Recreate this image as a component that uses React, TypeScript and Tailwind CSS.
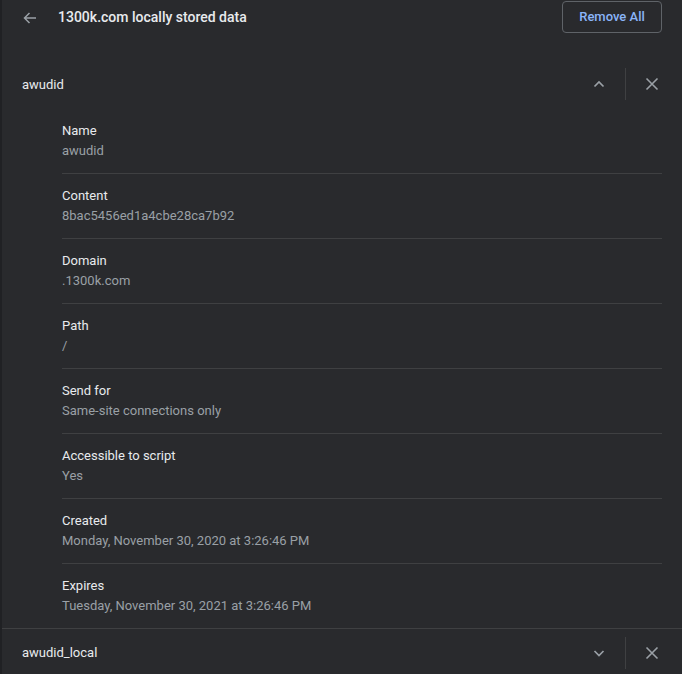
import React from "react";

const items: [string, string][] = [
  ["Name", "awudid"],
  ["Content", "8bac5456ed1a4cbe28ca7b92"],
  ["Domain", ".1300k.com"],
  ["Path", "/"],
  ["Send for", "Same-site connections only"],
  ["Accessible to script", "Yes"],
  ["Created", "Monday, November 30, 2020 at 3:26:46 PM"],
  ["Expires", "Tuesday, November 30, 2021 at 3:26:46 PM"],
];

function Chevron({ up }: { up: boolean }) {
  return (
    <svg width="20" height="20" viewBox="0 0 20 20" fill="none">
      <path
        d={up ? "M5.5 12.5 L10 8 L14.5 12.5" : "M5.5 8 L10 12.5 L14.5 8"}
        stroke="#9aa0a6"
        strokeWidth="1.7"
      />
    </svg>
  );
}

function Close() {
  return (
    <svg width="20" height="20" viewBox="0 0 20 20" fill="none">
      <path d="M4.5 4.5 L15.5 15.5 M15.5 4.5 L4.5 15.5" stroke="#9aa0a6" strokeWidth="1.6" />
    </svg>
  );
}

function RowHeader({ name, open, shift }: { name: string; open: boolean; shift?: boolean }) {
  return (
    <div className="flex h-[48px] items-center pl-[20px] pr-[12px]">
      <div className={"flex-1 text-[13px] text-[#e8eaed] " + (shift ? "pt-[2px]" : "")}>{name}</div>
      <div className="flex h-[36px] w-[36px] items-center justify-center">
        <Chevron up={open} />
      </div>
      <div className="ml-[8px] h-[32px] w-px bg-[#3f4042]" />
      <div className="ml-[8px] flex h-[36px] w-[36px] items-center justify-center">
        <Close />
      </div>
    </div>
  );
}

export default function App() {
  return (
    <div
      className="flex h-[674px] w-full overflow-hidden bg-[#292a2d]"
      style={{ fontFamily: "Roboto, 'Liberation Sans', sans-serif" }}
    >
      <div className="w-[2px] shrink-0 bg-[#202124]" />
      <div className="flex flex-1 flex-col">
        <div className="flex h-[34px] items-center pl-[20px] pr-[20px]">
          <div className="flex h-[20px] w-[16px] items-center justify-center pt-[2px]">
            <svg width="16" height="16" viewBox="0 0 16 16" fill="none">
              <path d="M14 8 H2.5 M7.5 3 L2.5 8 L7.5 13" stroke="#9aa0a6" strokeWidth="1.5" />
            </svg>
          </div>
          <div className="ml-[20px] flex-1 pt-[2px] text-[14px] font-medium text-[#e8eaed]">
            1300k.com locally stored data
          </div>
          <button className="mt-[1px] h-[32px] w-[100px] rounded-[4px] border border-[#5f6368] text-[13px] font-medium text-[#8ab4f8]">
            Remove All
          </button>
        </div>
        <div className="mt-[27px]">
          <RowHeader name="awudid" open={true} shift />
          <div className="pl-[60px] pr-[20px]">
            {items.map(([label, value], i) => (
              <div
                key={label}
                className={
                  "flex h-[65px] flex-col justify-center " +
                  (i > 0 ? "border-t border-[#3f4042]" : "")
                }
              >
                <div className="text-[13px] leading-5 text-[#e8eaed]">{label}</div>
                <div className="text-[13px] leading-5 text-[#9aa0a6]">{value}</div>
              </div>
            ))}
          </div>
          <div className="border-t border-[#3f4042]">
            <RowHeader name="awudid_local" open={false} />
          </div>
        </div>
      </div>
    </div>
  );
}
